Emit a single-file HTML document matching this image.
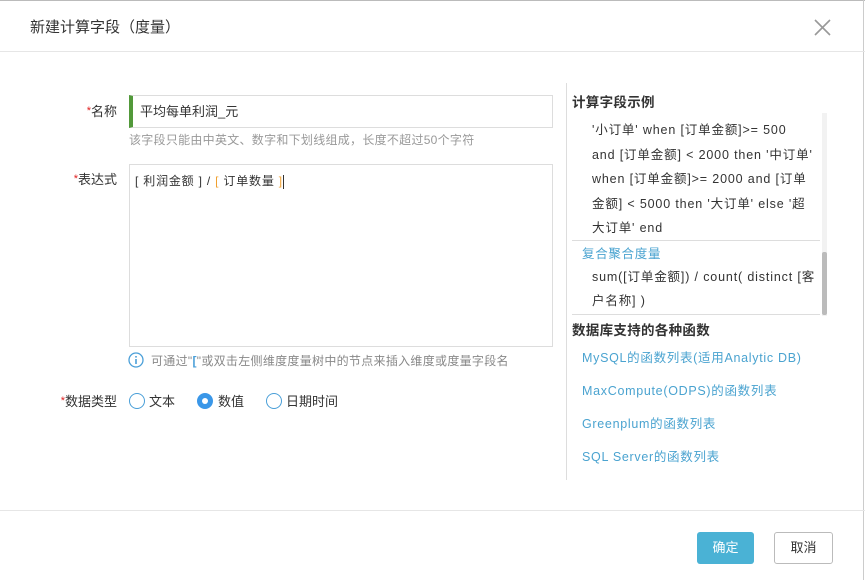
<!DOCTYPE html>
<html><head><meta charset="utf-8"><style>
*{margin:0;padding:0;box-sizing:border-box}
body{width:865px;height:580px;background:#fff;font-family:"Liberation Sans","Noto Sans CJK SC",sans-serif;color:#333;position:relative;overflow:hidden;font-size:13px;line-height:1.15}
.a{position:absolute;white-space:nowrap}
.hl{position:absolute;left:0;width:865px;height:1px;background:#e6e6e6}
.lbl{position:absolute;width:117px;text-align:right;font-size:13px;color:#333}
.lbl b{color:#e02020;font-weight:normal;font-size:11px;vertical-align:top}
.ex{position:absolute;left:592px;font-size:12.5px;letter-spacing:.85px;color:#333;white-space:nowrap}
.lk{position:absolute;left:582px;font-size:12.5px;color:#4aa3d0;letter-spacing:.7px;white-space:nowrap}
.radio{position:absolute;width:16px;height:16px;border:1px solid #4a9fd8;border-radius:50%}
</style></head><body>
<div style="position:absolute;left:0;top:0;width:865px;height:1px;background:#bbb"></div>
<div style="position:absolute;right:1px;top:0;width:1px;height:580px;background:#ccc"></div>
<div class="a" style="left:30px;top:19px;font-size:15px;color:#333">新建计算字段（度量）</div>
<svg class="a" style="left:814px;top:19px" width="17" height="17" viewBox="0 0 17 17"><path d="M1 1L16 16M16 1L1 16" stroke="#999" stroke-width="1.6"/></svg>
<div class="hl" style="top:51px"></div>

<div class="lbl" style="left:0;top:105px"><b>*</b>名称</div>
<div style="position:absolute;left:129px;top:95px;width:424px;height:33px;border:1px solid #ddd;border-left:4px solid #52993a"></div>
<div class="a" style="left:140px;top:105px;font-size:13px">平均每单利润_元</div>
<div class="a" style="left:129px;top:134px;font-size:12px;color:#999;letter-spacing:.28px">该字段只能由中英文、数字和下划线组成，长度不超过50个字符</div>

<div class="lbl" style="left:0;top:173px"><b>*</b>表达式</div>
<div style="position:absolute;left:129px;top:164px;width:424px;height:183px;border:1px solid #ddd"></div>
<div class="a" style="left:135px;top:175px;font-size:12px;letter-spacing:.8px">[ 利润金额 ] / <span style="color:#f0a030">[</span> 订单数量 <span style="color:#f0a030">]</span><span style="display:inline-block;width:1px;height:14px;background:#333;vertical-align:middle"></span></div>

<svg class="a" style="left:128px;top:352px" width="16" height="16" viewBox="0 0 16 16"><circle cx="8" cy="8" r="7" fill="none" stroke="#4a9fd8" stroke-width="1.3"/><rect x="7.2" y="7" width="1.6" height="5" fill="#4a9fd8"/><rect x="7.2" y="4" width="1.6" height="1.6" fill="#4a9fd8"/></svg>
<div class="a" style="left:151px;top:355px;font-size:12px;color:#888;letter-spacing:.3px">可通过"<b style="color:#4a9fd8">[</b>"或双击左侧维度度量树中的节点来插入维度或度量字段名</div>

<div class="lbl" style="left:0;top:395px"><b>*</b>数据类型</div>
<div class="radio" style="left:129px;top:393px"></div>
<div class="a" style="left:149px;top:395px">文本</div>
<div class="radio" style="left:197px;top:393px;background:#3a97e8;border-color:#3a97e8"><div style="position:absolute;left:4px;top:4px;width:6px;height:6px;border-radius:50%;background:#fff"></div></div>
<div class="a" style="left:218px;top:395px">数值</div>
<div class="radio" style="left:266px;top:393px"></div>
<div class="a" style="left:286px;top:395px">日期时间</div>

<div style="position:absolute;left:566px;top:83px;width:1px;height:397px;background:#ddd"></div>
<div class="a" style="left:572px;top:95px;font-size:13.5px;font-weight:bold;color:#333;letter-spacing:.3px">计算字段示例</div>
<div style="position:absolute;left:822px;top:113px;width:5px;height:203px;background:#f2f2f2"></div>
<div style="position:absolute;left:822px;top:252px;width:5px;height:63px;background:#bbb;border-radius:2px"></div>
<div class="ex" style="top:123px">'小订单' when [订单金额]&gt;= 500</div>
<div class="ex" style="top:148px">and [订单金额] &lt; 2000 then '中订单'</div>
<div class="ex" style="top:172px">when [订单金额]&gt;= 2000 and [订单</div>
<div class="ex" style="top:197px">金额] &lt; 5000 then '大订单' else '超</div>
<div class="ex" style="top:221px">大订单' end</div>
<div style="position:absolute;left:572px;top:240px;width:248px;height:1px;background:#ddd"></div>
<div class="lk" style="top:247px">复合聚合度量</div>
<div class="ex" style="top:270px">sum([订单金额]) / count( distinct [客</div>
<div class="ex" style="top:294px">户名称] )</div>
<div style="position:absolute;left:572px;top:314px;width:248px;height:1px;background:#ddd"></div>
<div class="a" style="left:572px;top:323px;font-size:13.5px;font-weight:bold;color:#333;letter-spacing:.3px">数据库支持的各种函数</div>
<div class="lk" style="top:351px">MySQL的函数列表(适用Analytic DB)</div>
<div class="lk" style="top:384px">MaxCompute(ODPS)的函数列表</div>
<div class="lk" style="top:417px">Greenplum的函数列表</div>
<div class="lk" style="top:450px">SQL Server的函数列表</div>

<div class="hl" style="top:510px"></div>
<div style="position:absolute;left:697px;top:532px;width:57px;height:32px;background:#4ab2d5;border-radius:3px;color:#fff;text-align:center;line-height:32px;font-size:13px">确定</div>
<div style="position:absolute;left:774px;top:532px;width:59px;height:32px;border:1px solid #bbb;border-radius:3px;color:#333;text-align:center;line-height:30px;font-size:13px">取消</div>
</body></html>
